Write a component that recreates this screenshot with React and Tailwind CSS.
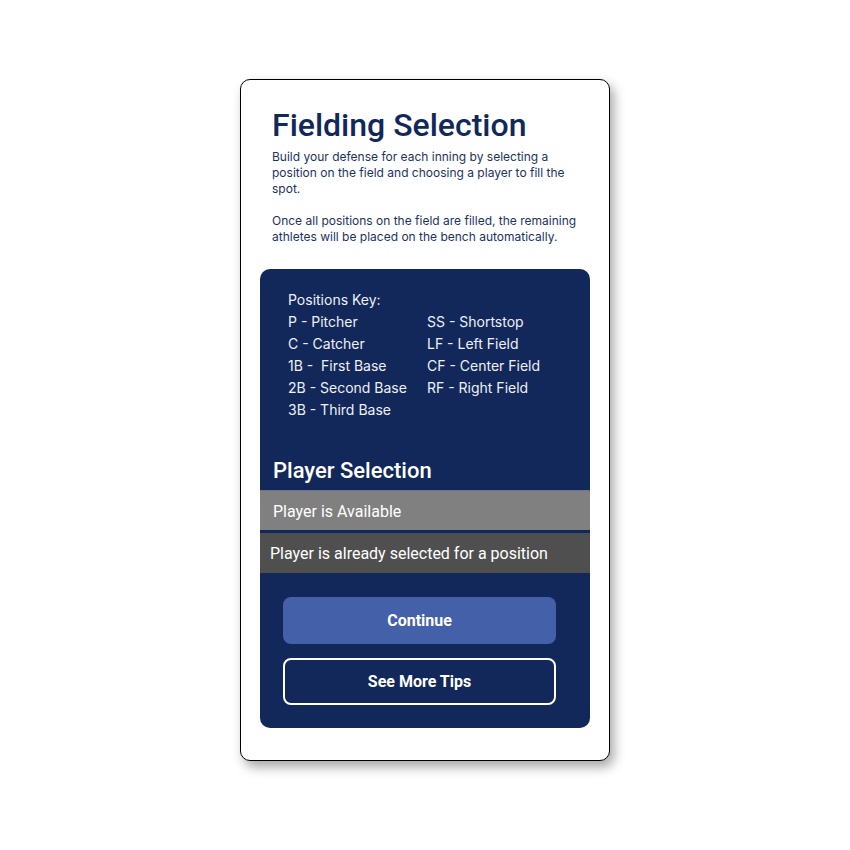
import React from "react";

const positions = [
  ["P - Pitcher", "SS - Shortstop"],
  ["C - Catcher", "LF - Left Field"],
  ["1B -  First Base", "CF - Center Field"],
  ["2B - Second Base", "RF - Right Field"],
  ["3B - Third Base", ""],
];

export default function App() {
  return (
    <div className="min-h-screen bg-white pt-[79px]">
      <div className="mx-auto w-[370px] h-[682px] rounded-[10px] border border-black bg-white shadow-[4px_6px_12px_rgba(0,0,0,0.35)] px-[19px] pt-[26px] pb-[32px] flex flex-col">
        {/* header */}
        <div className="px-3 text-[#11285a]">
          <h1 className="font-['Roboto',sans-serif] font-medium text-[32px] leading-[38px] whitespace-pre">
            Fielding Selection
          </h1>
          <p className="mt-[5px] font-['Inter',sans-serif] text-[12px] leading-[16px] text-[#1c3262] whitespace-pre-line">
            {"Build your defense for each inning by selecting a\nposition on the field and choosing a player to fill the\nspot."}
          </p>
          <p className="mt-4 font-['Inter',sans-serif] text-[12px] leading-[16px] text-[#1c3262] whitespace-pre-line">
            {"Once all positions on the field are filled, the remaining\nathletes will be placed on the bench automatically."}
          </p>
        </div>

        {/* dark panel */}
        <div className="mt-6 flex-1 rounded-[10px] bg-[#12285a] flex flex-col">
          <div className="pt-[20px] pl-[28px] font-['Inter',sans-serif] text-[14px] leading-[22px] text-[#eef0f6]">
            <div>Positions Key:</div>
            {positions.map(([a, b]) => (
              <div key={a} className="grid grid-cols-[139px_1fr]">
                <span className="whitespace-pre">{a}</span>
                <span>{b}</span>
              </div>
            ))}
          </div>

          <h2 className="mt-[37px] pl-[13px] font-['Roboto',sans-serif] font-medium text-[22px] leading-[26px] text-white">
            Player Selection
          </h2>

          <div className="mt-[6px] font-['Roboto',sans-serif] text-[16px] text-white">
            <div className="h-[40px] bg-[#808080] border-t border-[#6f7487] flex items-center pl-[13px] pt-[2px]">
              Player is Available
            </div>
            <div className="mt-[3px] h-[40px] bg-[#4f4f4f] flex items-center pl-[10px] pt-[1px]">
              Player is already selected for a position
            </div>
          </div>

          <div className="mt-6 ml-[23px] w-[273px] flex flex-col gap-[14px] font-['Roboto',sans-serif] font-bold text-[16px] text-white">
            <button className="h-[47px] rounded-[8px] bg-[#4360a8]">Continue</button>
            <button className="h-[47px] rounded-[8px] border-2 border-white">See More Tips</button>
          </div>
        </div>
      </div>
    </div>
  );
}
